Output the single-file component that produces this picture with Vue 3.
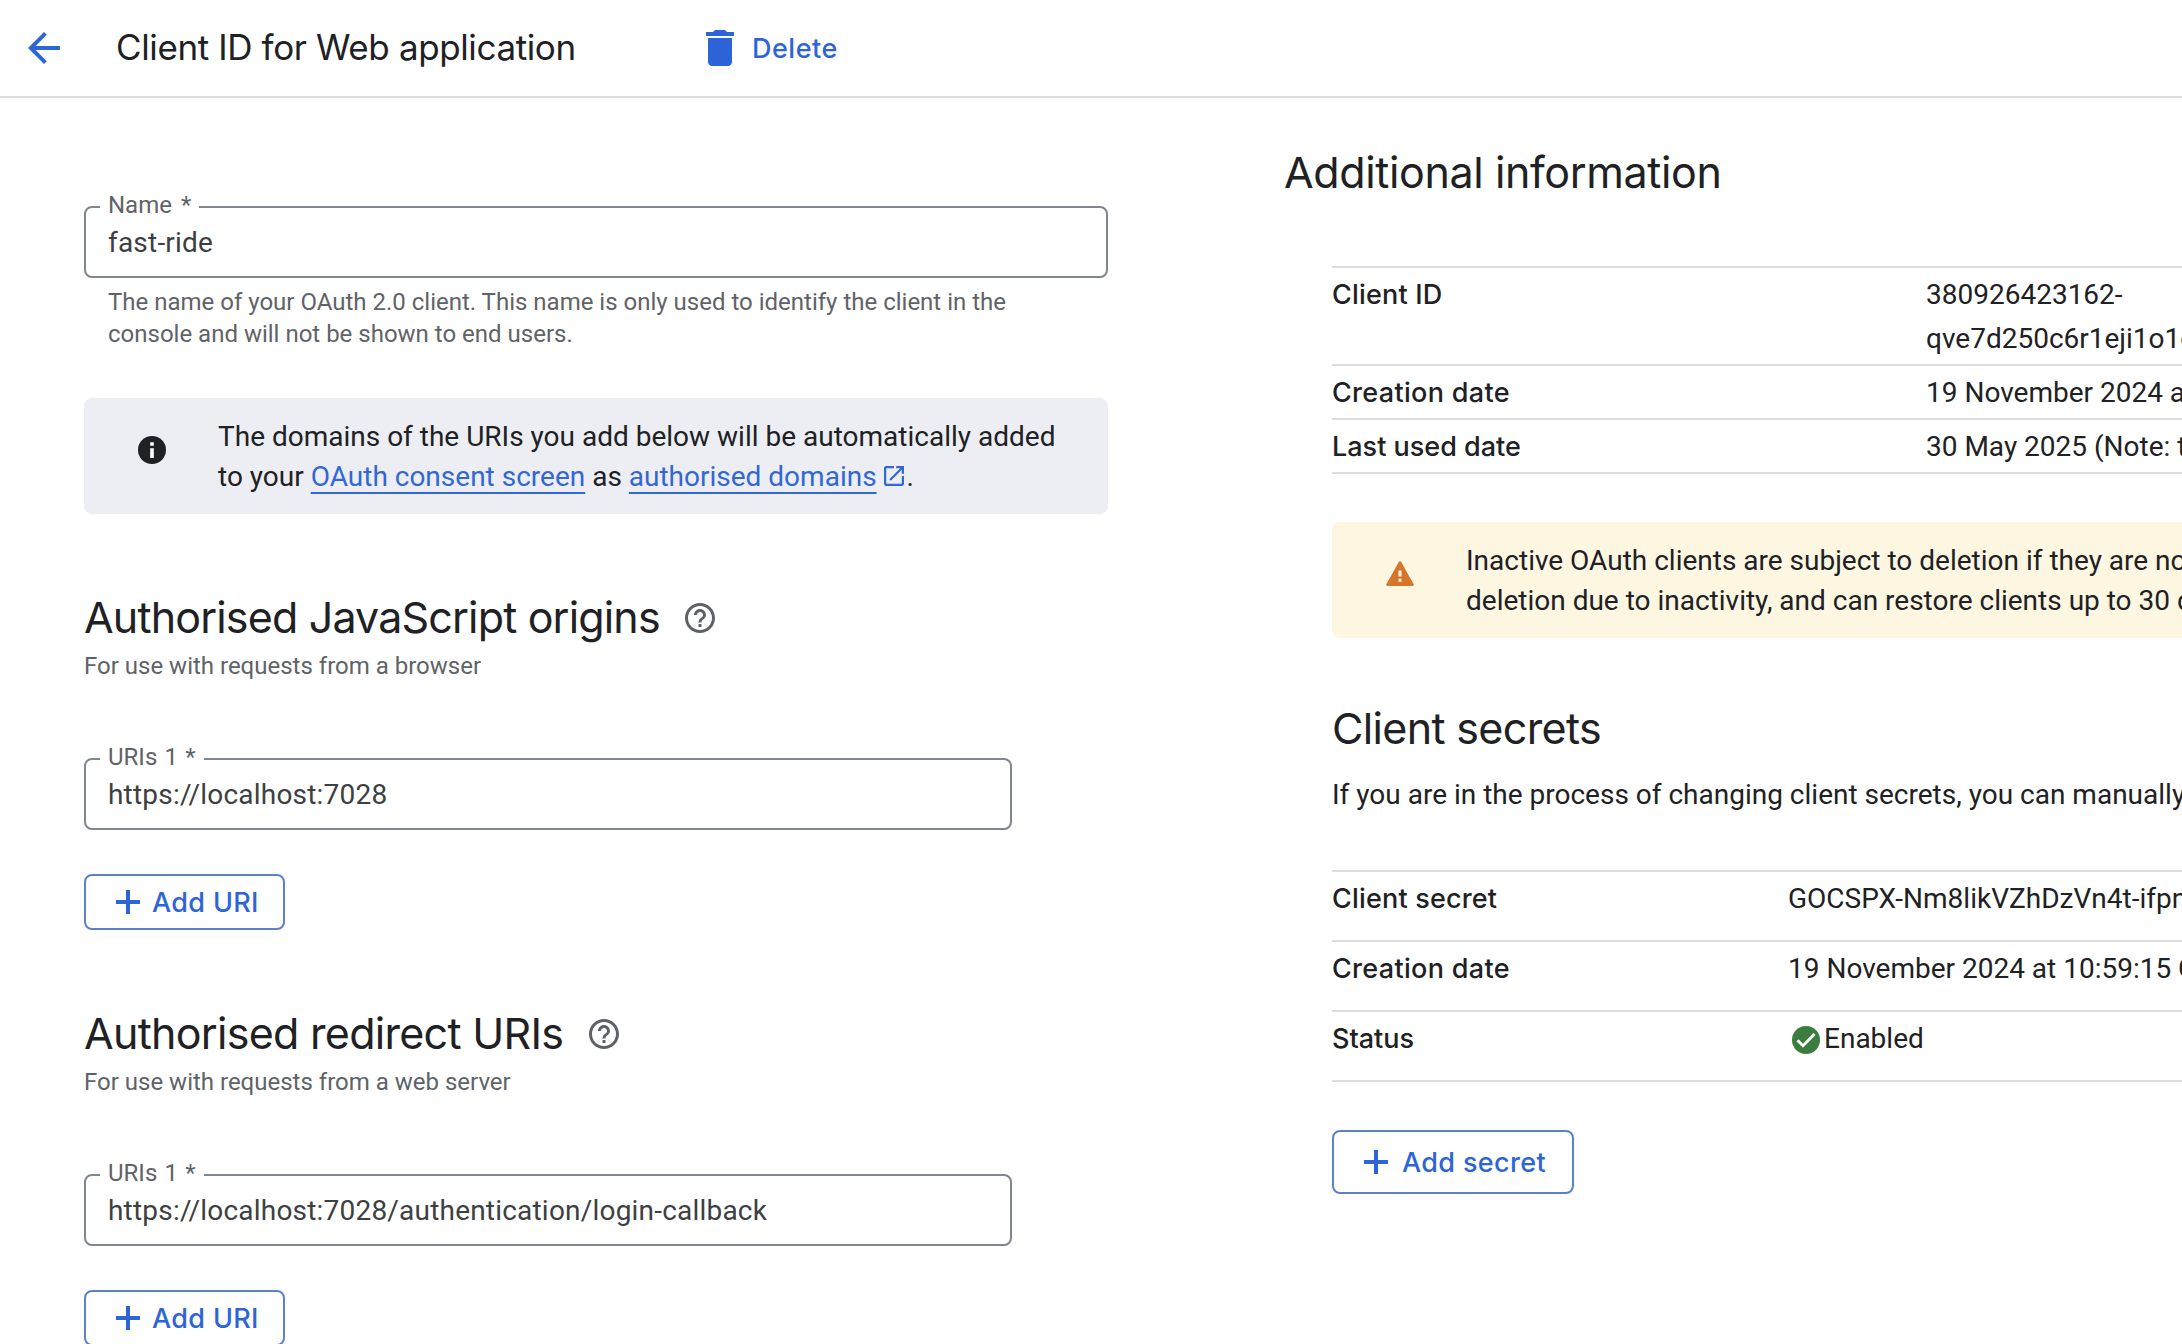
<script setup>
const uriSections = [
  {
    title: 'Authorised JavaScript origins',
    subtitle: 'For use with requests from a browser',
    value: 'https://localhost:7028',
    cls: 'origins',
  },
  {
    title: 'Authorised redirect URIs',
    subtitle: 'For use with requests from a web server',
    value: 'https://localhost:7028/authentication/login-callback',
    cls: 'redirects',
  },
]

const clientInfo = [
  { label: 'Client ID', lines: ['380926423162-', 'qve7d250c6r1eji1o1c'], cls: 'l-client-id' },
  { label: 'Creation date', lines: ['19 November 2024 at'], cls: 'l-creation' },
  { label: 'Last used date', lines: ['30 May 2025 (Note: this'], cls: 'l-last-used' },
]

const secretInfo = [
  { label: 'Client secret', value: 'GOCSPX-Nm8likVZhDzVn4t-ifpn', cls: 'l-secret' },
  { label: 'Creation date', value: '19 November 2024 at 10:59:15 G', cls: 'l-creation' },
  { label: 'Status', value: 'Enabled', enabled: true, cls: 'l-status' },
]
</script>

<template>
  <div class="page">
    <header class="topbar">
      <svg class="back" viewBox="4 4 16 16">
        <path d="M20 11H7.83l5.59-5.59L12 4l-8 8 8 8 1.41-1.41L7.83 13H20v-2z" />
      </svg>
      <h1>Client ID for Web application</h1>
      <button class="delete">
        <svg viewBox="5 3 14 18">
          <path d="M6 19c0 1.1.9 2 2 2h8c1.1 0 2-.9 2-2V7H6v12zM19 4h-3.500l-1-1h-5l-1 1H5v2h14V4z" />
        </svg>
        <span>Delete</span>
      </button>
    </header>

    <div class="columns">
      <main class="form">
        <fieldset class="field name">
          <legend><span>Name *</span></legend>
          <div class="value">fast-ride</div>
        </fieldset>
        <p class="hint">
          The name of your OAuth 2.0 client. This name is only used to identify the client in the<br />
          console and will not be shown to end users.
        </p>

        <div class="callout info">
          <svg class="callout-icon" viewBox="2 2 20 20">
            <circle cx="12" cy="12" r="10" fill="#202124" />
            <path d="M10.700 6.400h2.600v2.500h-2.600zM10.700 10.700h2.600v7h-2.600z" fill="#fff" />
          </svg>
          <p>
            The domains of the URIs you add below will be automatically added<br />
            to your <a>OAuth consent screen</a> as <a>authorised domains</a><svg class="ext" viewBox="3 3 18 18"><path d="M19 19H5V5h7V3H5c-1.110 0-2 .9-2 2v14c0 1.100.89 2 2 2h14c1.100 0 2-.9 2-2v-7h-2v7zM14 3v2h3.590l-9.830 9.830 1.410 1.410L19 6.410V10h2V3h-7z" /></svg>.
          </p>
        </div>

        <section v-for="s in uriSections" :key="s.title" class="uri-section">
          <div class="section-head">
            <h2 :class="s.cls">{{ s.title }}</h2>
            <svg class="help" viewBox="2 2 20 20">
              <path d="M11 18h2v-2h-2v2zm1-16C6.480 2 2 6.480 2 12s4.480 10 10 10 10-4.480 10-10S17.520 2 12 2zm0 18c-4.410 0-8-3.590-8-8s3.590-8 8-8 8 3.590 8 8-3.590 8-8 8zm0-14c-2.210 0-4 1.790-4 4h2c0-1.100.9-2 2-2s2 .9 2 2c0 2-3 1.750-3 5h2c0-2.250 3-2.500 3-5 0-2.210-1.790-4-4-4z" />
            </svg>
          </div>
          <p class="subtitle">{{ s.subtitle }}</p>
          <fieldset class="field uri">
            <legend><span>URIs 1 *</span></legend>
            <div class="value">{{ s.value }}</div>
          </fieldset>
          <button class="outlined add-uri">
            <svg class="plus" viewBox="0 0 24 24"><path d="M10 0h4v10h10v4H14v10h-4V14H0v-4h10z" /></svg>
            <span>Add URI</span>
          </button>
        </section>
      </main>

      <aside class="details">
        <h2 class="additional">Additional information</h2>
        <div class="details-body">
          <dl class="table client">
            <div v-for="r in clientInfo" :key="r.label" class="row">
              <dt :class="r.cls">{{ r.label }}</dt>
              <dd><div v-for="l in r.lines" :key="l">{{ l }}</div></dd>
            </div>
          </dl>

          <div class="callout warning">
            <svg class="callout-icon tri" viewBox="0 0 28 25">
              <path d="M13.100.600Q14 -.3 14.900.600L27.700 23.200Q28 25 26.800 25H1.200Q0 25 .3 23.200z" fill="#d5762c" />
              <path d="M12.500 9.500h3v6h-3zM12.500 17.800h3v3h-3z" fill="#fdf6e1" />
            </svg>
            <p>
              Inactive OAuth clients are subject to deletion if they are not<br />
              deletion due to inactivity, and can restore clients up to 30 days
            </p>
          </div>

          <h2 class="secrets">Client secrets</h2>
          <p class="para">If you are in the process of changing client secrets, you can manually</p>

          <dl class="table secret">
            <div v-for="r in secretInfo" :key="r.label" class="row">
              <dt :class="r.cls">{{ r.label }}</dt>
              <dd :class="{ status: r.enabled }">
                <svg v-if="r.enabled" class="check" viewBox="0 0 28 28">
                  <circle cx="14" cy="14" r="14" fill="#3b7d3f" />
                  <path d="M5.500 14.300l5.500 5.500L22.500 8" fill="none" stroke="#fff" stroke-width="2.800" />
                </svg>
                <span>{{ r.value }}</span>
              </dd>
            </div>
          </dl>

          <button class="outlined add-secret">
            <svg class="plus" viewBox="0 0 24 24"><path d="M10 0h4v10h10v4H14v10h-4V14H0v-4h10z" /></svg>
            <span>Add secret</span>
          </button>
        </div>
      </aside>
    </div>
  </div>
</template>

<style>
body {
  background: #fff;
  overflow: hidden;
}
</style>

<style scoped>
.page {
  width: 2182px;
  height: 1344px;
  overflow: hidden;
  font-family: Roboto, sans-serif;
  font-size: 28px;
  color: #202124;
}
h1, h2, p, dl, dd, dt, fieldset {
  margin: 0;
  padding: 0;
}
p, dd, h1, h2, button {
  white-space: nowrap;
}
svg {
  display: block;
  flex: none;
}
button {
  font: 500 27px/40px Inter, sans-serif;
  letter-spacing: 0.35px;
  background: none;
  border: 0;
  padding: 0;
  color: #2d65d9;
  display: flex;
  align-items: center;
}
button svg {
  fill: #2d65d9;
}
button span {
  padding-top: 2px;
}

.topbar {
  display: flex;
  align-items: center;
  box-sizing: border-box;
  height: 98px;
  border-bottom: 2px solid #dadce0;
  padding-left: 28px;
}
.back {
  width: 32px;
  height: 32px;
  fill: #2d65d9;
}
h1 {
  font: 400 35px/48px Inter, sans-serif;
  letter-spacing: -0.38px;
  width: 590px;
  margin-left: 56px;
  padding-bottom: 2px;
}
.delete {
  letter-spacing: 0.5px;
}
.delete svg {
  width: 28px;
  height: 36px;
  margin-right: 18px;
}

.columns {
  display: flex;
}
.form {
  width: 1024px;
  padding: 93px 176px 0 84px;
}
h2 {
  font: 400 43px/56px Inter, sans-serif;
}
h2.additional {
  letter-spacing: -0.37px;
}
h2.secrets {
  letter-spacing: -0.65px;
}

.field {
  box-sizing: border-box;
  height: 87px;
  border: 2px solid #80868b;
  border-radius: 8px;
  padding-left: 14px;
  min-width: 0;
}
.field legend {
  font-size: 24px;
  line-height: 28px;
  height: 32px;
  color: #5f6368;
  padding: 0 8px;
  word-spacing: 1.3px;
}
.field.name legend {
  word-spacing: 3px;
}
.field .value {
  color: #3c4043;
  line-height: 40px;
  letter-spacing: 0.2px;
  padding-left: 8px;
}
.hint {
  font-size: 24px;
  line-height: 32px;
  color: #5f6368;
  padding: 8px 24px 0;
}

.callout {
  display: flex;
  box-sizing: border-box;
  height: 116px;
  padding: 19px 0 0 54px;
  border-radius: 8px;
}
.callout p {
  line-height: 40px;
}
.info {
  margin-top: 48px;
  background: #edeef3;
}
.callout-icon {
  width: 28px;
  height: 28px;
  margin: 19px 52px 0 0;
}
.callout a {
  color: #3367d6;
  text-decoration: underline;
  text-decoration-thickness: 2px;
  text-underline-offset: 6px;
  text-decoration-skip-ink: none;
}
.ext {
  display: inline-block;
  width: 20px;
  height: 20px;
  margin: 0 3px 0 7px;
  fill: #3367d6;
}

.uri-section {
  height: 416px;
}
.info + .uri-section {
  margin-top: 74px;
}
.section-head {
  display: flex;
  align-items: center;
  height: 60px;
}
.section-head h2 {
  padding-bottom: 3px;
}
.help {
  width: 30px;
  height: 30px;
  fill: #5f6368;
}
.section-head h2.origins {
  width: 601px;
  letter-spacing: -0.83px;
}
.section-head h2.redirects {
  width: 505px;
  letter-spacing: -0.71px;
}
.subtitle {
  font-size: 24px;
  line-height: 32px;
  color: #5f6368;
  padding-top: 2px;
}
.uri {
  width: 928px;
  margin-top: 61px;
}
.outlined {
  box-sizing: border-box;
  border: 2px solid #5c80c9;
  border-radius: 8px;
  padding-left: 30px;
}
.plus {
  width: 24px;
  height: 24px;
  margin-right: 12px;
}
.add-uri {
  width: 201px;
  height: 56px;
  margin-top: 44px;
}

.details {
  flex: none;
  width: 898px;
  padding-top: 46px;
}
.details-body {
  padding-left: 48px;
}
.row {
  display: flex;
  border-bottom: 2px solid #dadce0;
  padding: 4px 0;
  line-height: 44px;
}
.table {
  border-top: 2px solid #dadce0;
}
.client {
  margin-top: 66px;
}
.row dt {
  width: 594px;
  flex: none;
  font-size: 27px;
  font-family: Inter, sans-serif;
  font-weight: 500;
}
.row dt,
.row dd {
  margin: 1px 0 -1px;
}
.l-client-id,
.l-secret {
  letter-spacing: 0.18px;
}
.l-creation {
  letter-spacing: 0.32px;
}
.secret .row {
  padding-bottom: 20px;
}
.secret dt {
  width: 456px;
}
.warning {
  margin: 48px -40px 0 0;
  background: #fdf6e1;
}
.tri {
  height: 25px;
  margin-top: 20px;
}
.secrets {
  margin-top: 62px;
}
.para {
  line-height: 40px;
  margin-top: 19px;
}
.secret {
  margin-top: 55px;
}
.status {
  display: flex;
}
.check {
  width: 28px;
  height: 28px;
  margin: 9px 4px 0 4px;
}
.add-secret {
  width: 242px;
  height: 64px;
  margin-top: 48px;
}
.add-secret .plus {
  margin-right: 14px;
}
</style>
